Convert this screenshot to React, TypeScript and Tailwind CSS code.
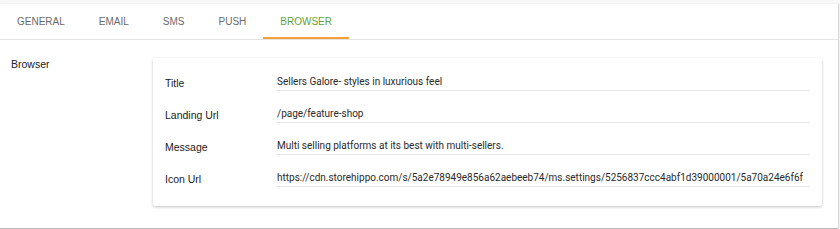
const TABS = ['General', 'Email', 'SMS', 'Push', 'Browser']

const FIELDS = [
  { label: 'Title', value: 'Sellers Galore- styles in luxurious feel' },
  { label: 'Landing Url', value: '/page/feature-shop' },
  { label: 'Message', value: 'Multi selling platforms at its best with multi-sellers.' },
  {
    label: 'Icon Url',
    value:
      'https://cdn.storehippo.com/s/5a2e78949e856a62aebeeb74/ms.settings/5256837ccc4abf1d39000001/5a70a24e6f6f',
  },
]

export default function App() {
  const active = 'Browser'
  return (
    <div className="w-[840px] h-[229px] bg-[#f7f7f7] pt-[4px] pr-[2px] font-['Liberation_Sans',Arial,sans-serif]">
      <div className="h-full bg-white border-b border-[#b8b8b8] shadow-[1px_0_1px_rgba(0,0,0,0.12)] flex flex-col">
        {/* Tabs */}
        <div className="h-[36px] flex border-b border-[#e3e3e3] shrink-0">
          {TABS.map((t) => {
            const on = t === active
            return (
              <div
                key={t}
                className={
                  on
                    ? 'h-full px-[17px] flex items-center text-[10px] uppercase text-[#5fa33c] border-b-2 border-[#f7a03a] pt-[2px]'
                    : 'h-full px-[17px] flex items-center text-[10px] uppercase text-[#6b6b6b]'
                }
              >
                {t}
              </div>
            )
          })}
        </div>

        {/* Body */}
        <div className="flex">
          <div className="w-[153px] shrink-0 pl-[11px] pt-[18px] text-[10.5px] leading-[13px] text-[#222]">
            Browser
          </div>
          <div className="mt-[18px] w-[669px] bg-white shadow-[0_1px_3px_rgba(0,0,0,0.25)] rounded-[2px] pt-[1px] pb-[19px] px-[12px]">
            {FIELDS.map((f) => (
              <div key={f.label} className="h-[32px] flex items-end">
                <div className="w-[112px] shrink-0 pb-[1px] text-[10.5px] leading-[13px] text-[#222]">
                  {f.label}
                </div>
                <div className="flex-1 min-w-0 overflow-hidden whitespace-nowrap border-b border-[#e6e6e6] pb-[2px] font-['Roboto',sans-serif] text-[10px] leading-[13px] text-[#2a2a2a]">
                  {f.value}
                </div>
              </div>
            ))}
          </div>
        </div>
      </div>
    </div>
  )
}
